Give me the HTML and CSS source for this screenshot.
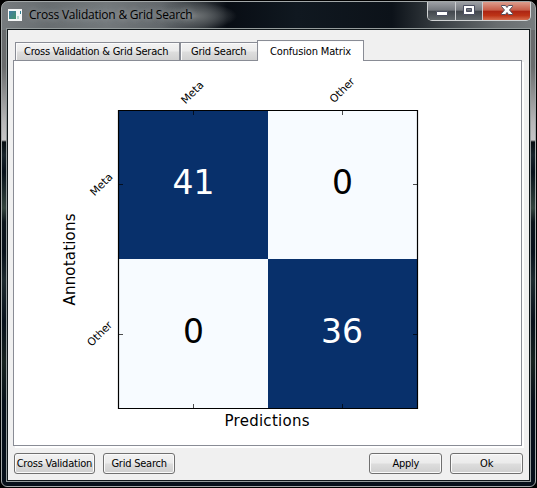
FILE: index.html
```html
<!DOCTYPE html>
<html lang="en">
<head>
<meta charset="utf-8">
<title>Cross Validation &amp; Grid Search</title>
<link rel="stylesheet" href="styles.css">
</head>
<body>
<div class="window">
  <header class="titlebar">
    <svg class="app-icon" width="14" height="12" viewBox="0 0 14 12"><defs><linearGradient id="ic" x2="1" y2="1"><stop stop-color="#437da5"/><stop offset="1" stop-color="#43936b"/></linearGradient></defs><path fill="#f5f7f7" d="M0 0h14v12H0z"/><path fill="url(#ic)" d="M1 2h7v8H1z"/><path fill="#b5d6d0" d="M9 7h2v3H9z"/><path fill="#328296" d="M12 2h1v3h-1z"/></svg>
    <h1 class="title">Cross Validation &amp; Grid Search</h1>
    <div class="controls">
      <span class="control minimize"><svg width="28" height="19" viewBox="0 0 28 19"><path fill="#fff" stroke="#4b4f61" d="M8.500 10.500h11v4h-11z"/></svg></span>
      <span class="control maximize"><svg width="26" height="19" viewBox="0 0 26 19"><path fill="#fff" fill-rule="evenodd" stroke="#4b4f61" d="M7.500 4.500h11v9h-11zM10.500 7.500v3h5v-3z"/></svg></span>
      <span class="control close"><svg width="47" height="19" viewBox="0 0 47 19"><path fill="#fff" stroke="#51505f" d="M18.500 4.500h4l1.500 2 1.500-2h4v1L26.500 9l3 3.500v1h-4L24 11.500l-1.500 2h-4v-1l3-3.500-3-3.500z"/></svg></span>
    </div>
  </header>
  <main class="client">
    <nav class="tabs">
      <span class="tab tab-cv">Cross Validation &amp; Grid Serach</span>
      <span class="tab tab-grid">Grid Search</span>
      <span class="tab active">Confusion Matrix</span>
    </nav>
    <section class="panel">
      <svg class="plot" width="507" height="384" viewBox="14 61 507 384">
        <path fill="#f7fbff" d="M118 110h300v299H118z"/>
        <path fill="#08306b" d="M118 110h150v149H118zM268 259h150v150H268z"/>
        <path fill="none" stroke="#000" stroke-width="1.200" d="M118.500 110.500h299v298h-299z"/>
        <path stroke="#000" stroke-width=".7" d="M193.500 111v4M342.500 111v4M193.500 408v-4M342.500 408v-4M119 184.500h4M119 334.500h4M417 184.500h-4M417 334.500h-4"/>
        <g class="values">
          <text class="light" x="193.500" y="194">41</text><text x="342.500" y="194">0</text>
          <text x="193.500" y="342.500">0</text><text class="light" x="342" y="342.500">36</text>
        </g>
        <g class="ticks">
          <text transform="translate(185.500 104.500) rotate(-45)">Meta</text>
          <text transform="translate(334 103.500) rotate(-45)">Other</text>
          <text transform="translate(94.500 196.500) rotate(-45)">Meta</text>
          <text transform="translate(91.500 347) rotate(-45)">Other</text>
        </g>
        <g class="axes">
          <text x="267" y="426" textLength="85">Predictions</text>
          <text transform="translate(75 259.500) rotate(-90)" textLength="92">Annotations</text>
        </g>
      </svg>
    </section>
    <footer class="actions">
      <button class="b1">Cross Validation</button>
      <button class="b2">Grid Search</button>
      <button class="b3">Apply</button>
      <button class="b4">Ok</button>
    </footer>
  </main>
</div>
</body>
</html>
```
FILE: styles.css
```css
* { box-sizing: border-box; }
body { margin: 0; width: 537px; height: 488px; padding: 1px; background: #000; overflow: hidden; font: 11px "DejaVu Sans Condensed", "DejaVu Sans", sans-serif; font-stretch: condensed; color: #000; }
.window {
  width: 535px; height: 486px; padding: 0 5px 5px; border: 1px solid #a2a7a8; border-radius: 7px 7px 6px 6px;
  background:
    radial-gradient(ellipse 45px 14px at 190px 14px, #737779 0, #5f6467bb 45%, transparent 100%),
    linear-gradient(90deg, #767b7e 0, #686d70 45px, #73787b 105px, #62676b 160px, #30353a 202px, #080d14 225px, #101820 295px, #0c1219 390px, #3b4145 440px, #686d6f 495px, #777c7e) 0 0 / 100% 28px no-repeat,
    linear-gradient(#686b6d 28px, #6a6c6d 65px, #b7b7b8 120px, #c5c5c6 138px, #060d11 140px, #17232a 153px, #07101a 170px, #34443e 206px, #0b131a 220px, #07101a 250px, #1e2a2f 278px, #07101a 320px, #17221f 360px, #07101a 400px, #07101a);
}
.titlebar { display: flex; height: 27px; padding-left: 1px; }
.app-icon { margin-top: 7px; flex: none; }
.title { margin: 4px 0 0 7px; font: 12px/17px "Open Sans", "Noto Sans", sans-serif; letter-spacing: -.22px; white-space: nowrap; text-shadow: 0 0 7px #aaaeb0, 0 0 7px #888c90; }
.controls { display: flex; height: 19px; margin-left: auto; margin-right: -1px; border: 1px solid #d0d3d4; border-top: 0; border-radius: 0 0 5px 5px; overflow: hidden; }
.control { display: block; height: 18px; border-right: 1px solid #cbcdd0; background: linear-gradient(#9da0a5, #74787e 46%, #41464c 50%, #61676b); }
.control svg { display: block; margin-top: -1px; }
.minimize { width: 28px; }
.maximize { width: 27px; }
.close { width: 47px; border: 0; background: linear-gradient(#dd9d8d, #c75c47 46%, #ac2413 50%, #bd3417 75%, #d66d4e); }
.client { height: 452px; padding: 10px 6px 0 5px; border: 1px solid #10171a; outline: 1px solid #949b9b; background: #f0f0f0; }
.tabs { display: flex; align-items: flex-end; height: 20px; padding-left: 2px; position: relative; }
.tab { height: 18px; border: 1px solid #898c95; border-bottom: 0; background: linear-gradient(#f3f3f3, #ebebeb 48%, #dedede 52%, #d1d1d1); box-shadow: inset 1px 1px #fbfbfb; line-height: 18px; letter-spacing: -.23px; white-space: nowrap; }
.tab-cv { width: 165px; padding-left: 8px; }
.tab-grid { width: 78px; padding-left: 10px; }
.active { width: 107px; height: 21px; padding-left: 12px; margin: 0 0 -1px -1px; background: #fff; line-height: 21px; letter-spacing: -.16px; }
.panel { width: 509px; height: 386px; border: 1px solid #898c95; background: #fff; box-shadow: 2px 2px #fff; }
.plot { display: block; font-family: "DejaVu Sans", sans-serif; font-stretch: normal; }
.values { font-size: 33px; text-anchor: middle; }
.light { fill: #fff; }
.ticks { font-size: 10.700px; }
.axes { font-size: 15px; text-anchor: middle; }
.actions { display: flex; margin: 7px 0 0 1px; }
button { height: 21px; padding: 0; border: 1px solid #707070; border-radius: 3px; box-shadow: inset 0 0 0 1px #fafafa; background: linear-gradient(#f2f2f2, #ebebeb 48%, #dddddd 52%, #cfcfcf); font: inherit; letter-spacing: -.23px; color: #000; white-space: nowrap; }
.b1 { width: 81px; }
.b2 { width: 73px; margin-left: 8px; }
.b3 { width: 73px; margin-left: 194px; }
.b4 { width: 73px; margin-left: 8px; }
```
